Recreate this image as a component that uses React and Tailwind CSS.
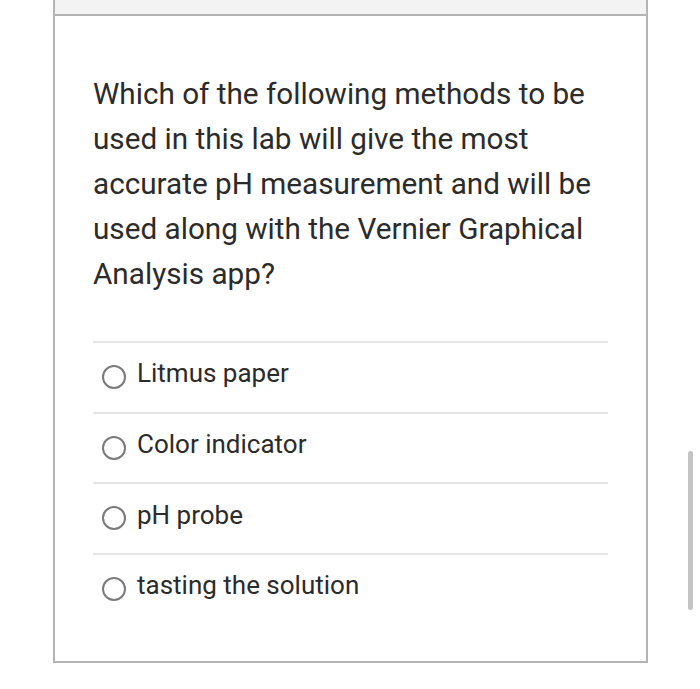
export default function App() {
  const options = ["Litmus paper", "Color indicator", "pH probe", "tasting the solution"];
  return (
    <div className="relative w-[700px] h-[689px] bg-white overflow-hidden" style={{ fontFamily: "Roboto, 'Noto Sans', sans-serif" }}>
      <div className="ml-[53px] w-[595px] h-[663px] border-x-2 border-b-2 border-[#b4b4b4] flex flex-col">
        <div className="h-[16px] bg-[#f3f3f3] border-b-2 border-[#b4b4b4]" />
        <div className="pl-[38px] pr-[38px] pt-[55px]">
          <p className="text-[29.7px] leading-[45px] text-[#2b2b2b] pr-[5px]">
            Which of the following methods to be used in this lab will give the most accurate pH measurement and will be used along with the Vernier Graphical Analysis app?
          </p>
          <div className="mt-[45px]">
            {options.map((o) => (
              <div key={o} className="border-t-2 border-[#e6e6e6] h-[70.7px] flex items-center gap-[11px] pl-[9px]">
                <span className="w-[24px] h-[24px] rounded-full border-2 border-[#7a7a7a] shrink-0 -mt-[1px]" />
                <span className="text-[26px] text-[#2b2b2b] -mt-[7px]">{o}</span>
              </div>
            ))}
          </div>
        </div>
      </div>
      <div className="absolute left-[688px] top-[451px] w-[5px] h-[159px] rounded-full bg-[#c4c4c4]" />
    </div>
  );
}
